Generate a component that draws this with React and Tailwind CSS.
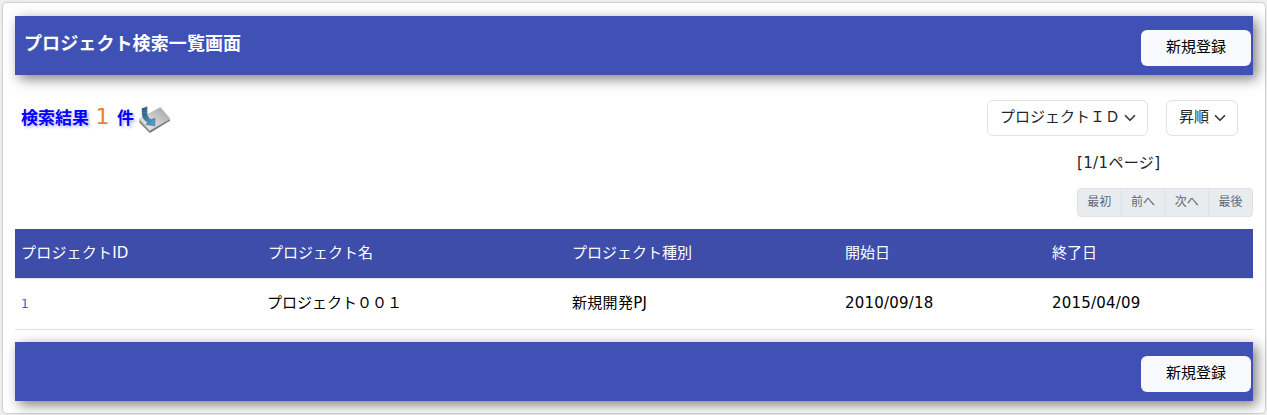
import React from "react";

const columns = ["プロジェクトID", "プロジェクト名", "プロジェクト種別", "開始日", "終了日"];
const rows = [["1", "プロジェクト００１", "新規開発PJ", "2010/09/18", "2015/04/09"]];
const grid = "grid grid-cols-[246px_305px_273px_207px_1fr] px-[6px]";

function Bar({ title }) {
  return (
    <div className="flex h-[59px] items-start justify-between bg-[#3f51b5] pr-[2px] shadow-[4px_4px_12px_0px_rgba(0,0,0,0.5)]">
      <h1 className="pl-[9px] pt-[16px] text-[18px] font-bold leading-[24px] tracking-[0.1px] text-white">{title}</h1>
      <button className="mt-[14px] h-[36px] w-[110px] rounded-[6px] bg-[#f8f9fc] pb-[3px] text-[15px] leading-[22px] text-black">
        新規登録
      </button>
    </div>
  );
}

function SortSelect({ label, width }) {
  return (
    <button className={`flex h-[36px] items-center justify-between rounded-[6px] border border-[#dee2e6] bg-white pl-[12px] pr-[11px] text-[15px] text-[#212529] ${width}`}>
      <span className="whitespace-nowrap pb-[3px] leading-[22px]">{label}</span>
      <svg className="h-[12px] w-[12px]" viewBox="0 0 16 16" fill="none" stroke="#343a40" strokeWidth="2.3" strokeLinecap="round" strokeLinejoin="round">
        <path d="m2 5 6 6 6-6" />
      </svg>
    </button>
  );
}

function DownloadIcon() {
  return (
    <svg className="h-[28px] w-[34px]" viewBox="0 0 34 28">
      <defs>
        <linearGradient id="plate" x1="0" y1="1" x2="1" y2="0">
          <stop offset="0" stopColor="#f1f1f1" />
          <stop offset="0.45" stopColor="#d2d2d2" />
          <stop offset="1" stopColor="#9c9c9c" />
        </linearGradient>
        <linearGradient id="arrow" x1="0" y1="0" x2="0.6" y2="1">
          <stop offset="0" stopColor="#244d6c" />
          <stop offset="1" stopColor="#559bc5" />
        </linearGradient>
      </defs>
      <path d="M1.5 14.5 11.5 24.5 32 13v1.8L11.8 27 1.5 16.8z" fill="#747474" />
      <path d="M1.5 13.2 22.3 1.5 32 12.8 11.5 24.8z" fill="url(#plate)" stroke="#b0b0b0" strokeWidth="0.7" />
      <path d="m1.5 13.2 10 11.6v2L1.5 16.6z" fill="#969696" />
      <path d="M4 2.2C6 2.6 7.5.8 9.1.8v6.5c0 3.2 1.4 5 4.2 6.2L17 12v8L7.7 18.6l2.2-2C5.8 14.3 4 11.1 4 7.5z" fill="url(#arrow)" stroke="#386887" strokeWidth="0.4" />
      <path d="M4.2 4.8C6 5 7.4 3.6 9 3.5M4.2 7.2c1.8 0 3.2-1 4.9-1.3" stroke="#6b91aa" strokeWidth="0.6" fill="none" />
    </svg>
  );
}

export default function App() {
  return (
    <div className="h-[415px] bg-[#ededed] pl-[2px] pr-[1px] pt-[2px] font-['DejaVu_Sans','Noto_Sans_CJK_JP',sans-serif]">
      <main className="h-[412px] rounded-[5px] border border-[#d0d0d0] bg-white pl-[12px] pr-[12px] pt-[13px]">
        <Bar title="プロジェクト検索一覧画面" />

        <div className="flex h-[61px] items-start justify-between pl-[6px] pr-[15px] pt-[25px]">
          <div className="flex h-[36px] items-center text-[17px] font-bold leading-[24px] text-[#0000ff]">
            <span className="[text-shadow:2px_2px_3px_rgba(0,0,255,0.3)]">検索結果</span>
            <span className="-mt-[3px] ml-[6px] w-[15px] text-center text-[22px] font-normal text-[#ed7d31]">1</span>
            <span className="ml-[7px] [text-shadow:2px_2px_3px_rgba(0,0,255,0.3)]">件</span>
            <span className="ml-[4px] mt-[3px]"><DownloadIcon /></span>
          </div>
          <div className="flex gap-[18px]">
            <SortSelect label="プロジェクトＩＤ" width="w-[161px]" />
            <SortSelect label="昇順" width="w-[72px]" />
          </div>
        </div>

        <div className="ml-auto w-[176px] pt-[16px]">
          <p className="h-[22px] whitespace-nowrap text-[15px] leading-[22px] tracking-[0.35px] text-[#212529]">[1/1ページ]</p>
          <nav className="mt-[14px] flex h-[29px] overflow-hidden rounded-[4px] border border-[#dee2e6] bg-[#e9ecef]">
            {["最初", "前へ", "次へ", "最後"].map((label) => (
              <button key={label} className="flex-1 border-l border-[#dee2e6] pb-[2px] text-[12px] leading-[18px] text-[#606a73] first:border-l-0">
                {label}
              </button>
            ))}
          </nav>
        </div>

        <section className="mt-[12px] text-[15px] leading-[22px]">
          <div className={`${grid} h-[50px] border-b border-[#dee2e6] bg-[#3d4da9] pt-[13px] text-white`}>
            {columns.map((column, index) => (
              <div key={column} className={index === 0 ? "tracking-[0.2px]" : index === 1 ? "pl-[1px]" : ""}>{column}</div>
            ))}
          </div>
          {rows.map((row) => (
            <div key={row[0]} className={`${grid} h-[51px] border-b border-[#dee2e6] pt-[13px] text-black`}>
              {row.map((cell, index) => (
                <div key={index} className={index === 0 ? "pt-[1px] text-[12px] text-[#0d6efd]" : index > 2 ? "tracking-[0.2px]" : index === 2 ? "tracking-[0.3px]" : ""}>
                  {cell}
                </div>
              ))}
            </div>
          ))}
        </section>

        <div className="mt-[12px]"><Bar title="" /></div>
      </main>
    </div>
  );
}
